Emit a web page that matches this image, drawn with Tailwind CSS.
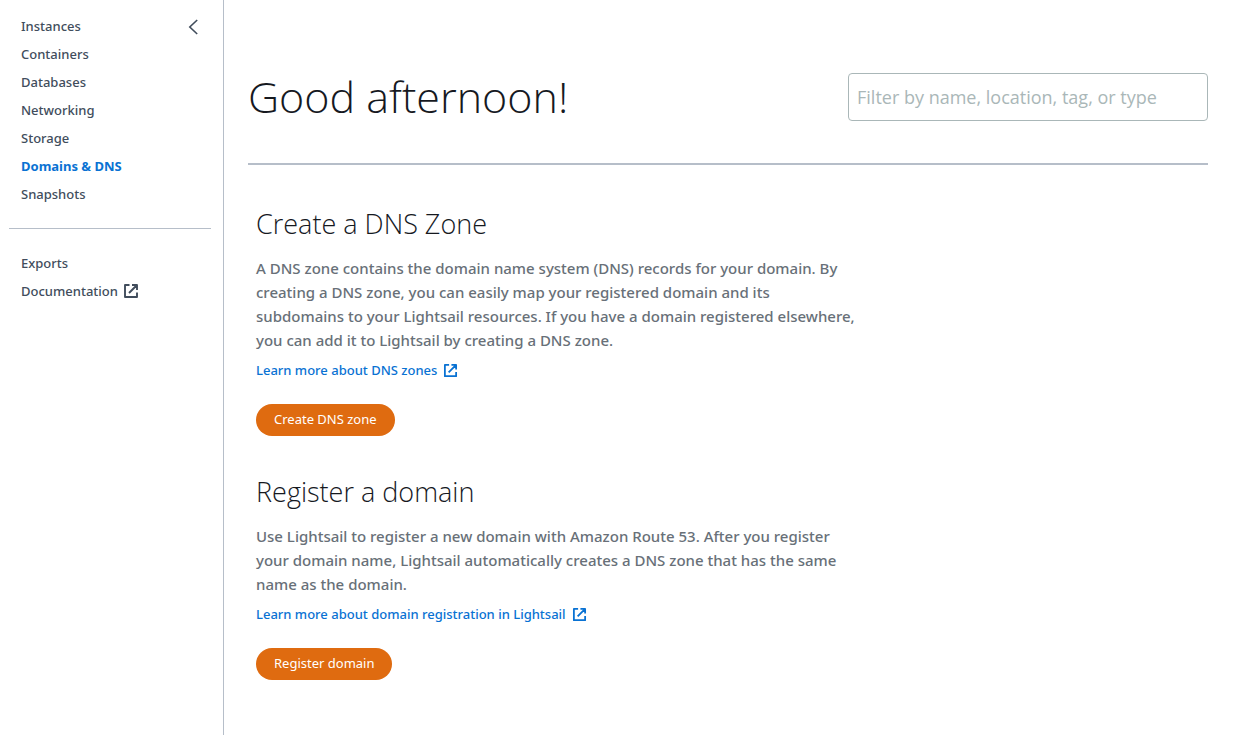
<!DOCTYPE html>
<html lang="en">
  <head>
    <meta charset="UTF-8" />
    <meta name="viewport" content="width=device-width, initial-scale=1.0" />
    <title>Domains &amp; DNS</title>
    <script src="https://cdn.jsdelivr.net/npm/@tailwindcss/browser@4"></script>
  </head>
  <body
    class="min-h-screen flex bg-white text-[#16191f] font-['Noto_Sans','Open_Sans',sans-serif]"
  >
    <aside
      class="w-56 shrink-0 border-r border-[#b6bec9] pt-3 pl-[9px] pr-3 text-[13px] leading-7 font-medium text-[#414d5c]"
    >
      <div class="flex items-start justify-between pl-3 pr-2">
        <nav>
          <ul>
            <li><a href="#" class="block">Instances</a></li>
            <li><a href="#" class="block">Containers</a></li>
            <li><a href="#" class="block">Databases</a></li>
            <li><a href="#" class="block">Networking</a></li>
            <li><a href="#" class="block">Storage</a></li>
            <li>
              <a href="#" class="block font-bold text-[#0972d3]">Domains &amp; DNS</a>
            </li>
            <li><a href="#" class="block">Snapshots</a></li>
          </ul>
        </nav>
        <button type="button" aria-label="Close navigation" class="flex h-7 w-5 items-center justify-center pt-px">
          <svg class="h-4 w-4" viewBox="0 0 16 16" fill="none" stroke="currentColor" stroke-width="1.6">
            <path d="M12.2 1 4.8 8l7.4 7" />
          </svg>
        </button>
      </div>

      <hr class="my-5 border-[#b6bec9]" />

      <ul class="pl-3">
        <li><a href="#" class="block">Exports</a></li>
        <li>
          <a href="#" class="flex items-center gap-[5px]">
            Documentation
            <svg class="h-4 w-4" viewBox="0 0 16 16" fill="none" stroke="currentColor" stroke-width="1.9" stroke-linejoin="round">
              <path d="M6.5 2H2v12h12V9.5M9 2h5v5M14 2 6 10" />
            </svg>
          </a>
        </li>
      </ul>
    </aside>

    <main class="min-w-0 flex-1 pl-6 pr-[35px] pt-[73px]">
      <header class="flex items-center justify-between border-b-2 border-[#b6bec9] pb-[42px]">
        <h1 class="font-['Open_Sans','Noto_Sans',sans-serif] text-[43px] leading-[48px] font-light">Good afternoon!</h1>
        <input
          type="text"
          aria-label="Filter resources"
          placeholder="Filter by name, location, tag, or type"
          class="h-12 w-[360px] rounded border border-[#aab7b8] px-2 font-['Open_Sans','Noto_Sans',sans-serif] text-[18px] placeholder:text-[#aab7b8]"
        />
      </header>

      <div class="flex max-w-[620px] flex-col gap-[38px] px-2 pt-[41px]">
        <section>
          <h2 class="font-['Open_Sans','Noto_Sans',sans-serif] text-[27px] leading-9 font-light">Create a DNS Zone</h2>
          <p class="mt-[14px] text-[15px] leading-6 font-medium text-[#687078]">
            A DNS zone contains the domain name system (DNS) records for your domain. By
            creating a DNS zone, you can easily map your registered domain and its
            subdomains to your Lightsail resources. If you have a domain registered elsewhere,
            you can add it to Lightsail by creating a DNS zone.
          </p>
          <a href="#" class="mt-2 flex items-center gap-[6px] text-[13px] leading-5 font-medium text-[#0972d3]">
            Learn more about DNS zones
            <svg class="h-[15px] w-[15px]" viewBox="0 0 16 16" fill="none" stroke="currentColor" stroke-width="1.9" stroke-linejoin="round">
              <path d="M6.5 2H2v12h12V9.5M9 2h5v5M14 2 6 10" />
            </svg>
          </a>
          <button type="button" class="mt-6 h-8 rounded-full bg-[#df6b10] px-[18px] text-[13px] text-white">
            Create DNS zone
          </button>
        </section>

        <section>
          <h2 class="font-['Open_Sans','Noto_Sans',sans-serif] text-[27px] leading-9 font-light">Register a domain</h2>
          <p class="mt-[14px] text-[15px] leading-6 font-medium text-[#687078]">
            Use Lightsail to register a new domain with Amazon Route 53. After you register
            your domain name, Lightsail automatically creates a DNS zone that has the same
            name as the domain.
          </p>
          <a href="#" class="mt-2 flex items-center gap-[6px] text-[13px] leading-5 font-medium text-[#0972d3]">
            Learn more about domain registration in Lightsail
            <svg class="h-[15px] w-[15px]" viewBox="0 0 16 16" fill="none" stroke="currentColor" stroke-width="1.9" stroke-linejoin="round">
              <path d="M6.5 2H2v12h12V9.5M9 2h5v5M14 2 6 10" />
            </svg>
          </a>
          <button type="button" class="mt-6 h-8 rounded-full bg-[#df6b10] px-[18px] text-[13px] text-white">
            Register domain
          </button>
        </section>
      </div>
    </main>
  </body>
</html>
